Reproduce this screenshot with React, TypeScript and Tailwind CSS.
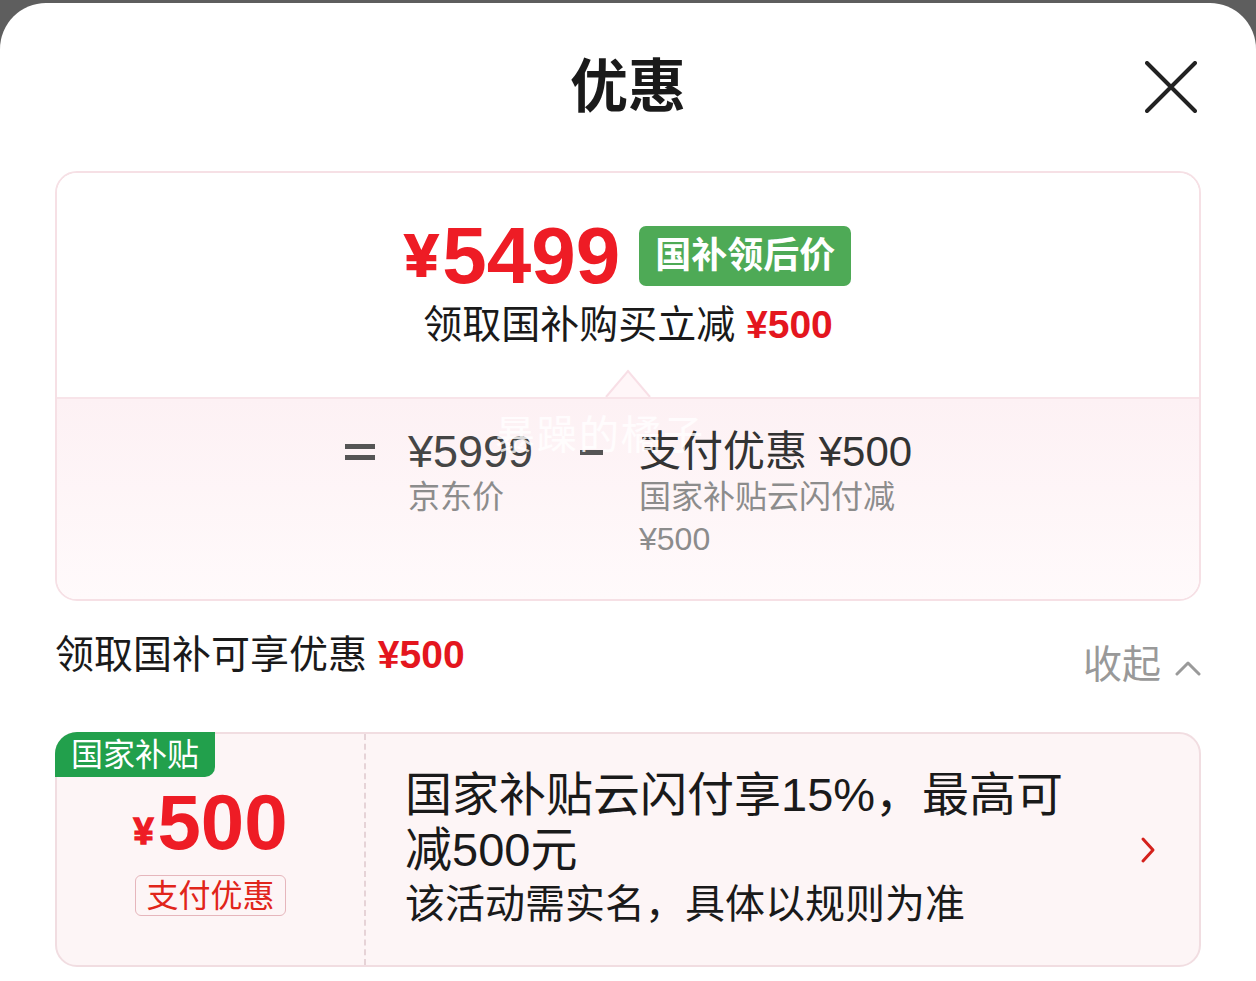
import React from 'react';

const cjk = { fontFamily: '"Liberation Sans", "Noto Sans CJK SC", sans-serif' };

const App: React.FC = () => {
    return (
        <div className="w-[1256px] h-[981px] bg-[#5e5e5e] pt-[3px] overflow-hidden" style={cjk}>
            <div className="h-full bg-white rounded-t-[46px] px-[55px]">
                {/* header */}
                <div className="relative h-[168px] flex items-center justify-center">
                    <h1 className="text-[58px] leading-none font-bold text-[#1a1a1a]">优惠</h1>
                    <svg className="absolute right-[4px] top-[58px]" width="52" height="52" viewBox="0 0 52 52">
                        <path d="M2 2 L50 50 M50 2 L2 50" stroke="#222" strokeWidth="4" strokeLinecap="round" />
                    </svg>
                </div>

                {/* price breakdown card */}
                <div className="border-2 border-[#f6e0e5] rounded-[22px] overflow-hidden">
                    <div className="relative h-[224px] flex flex-col items-center pt-[43px] bg-white">
                        <div className="flex items-center">
                            <span className="text-[60px] leading-none font-bold text-[#ee1c25] mr-[4px] [-webkit-text-stroke:2px_#ee1c25]">¥</span>
                            <span className="text-[80px] leading-none font-bold text-[#ee1c25]">5499</span>
                            <span className="ml-[19px] h-[60px] px-[16px] flex items-center rounded-[7px] bg-[#4eaa56] text-white text-[36px] font-bold">国补领后价</span>
                        </div>
                        <div className="mt-[7px] text-[39px] leading-[44px] text-[#1a1a1a]">
                            领取国补购买立减 <span className="text-[#e4161e] font-bold">¥500</span>
                        </div>
                        <svg className="absolute left-1/2 -translate-x-1/2 bottom-0" width="48" height="28" viewBox="0 0 48 28">
                            <path d="M2 28 L24 2 L46 28" fill="#fff6f8" stroke="#f8dfe6" strokeWidth="2" />
                        </svg>
                    </div>
                    <div className="relative h-[202px] border-t-2 border-[#f8e4e9] bg-gradient-to-b from-[#fdf1f4] to-[#fffafb] pt-[29px] flex justify-center">
                        <div className="w-[30px] mr-[33px] h-[48px] flex flex-col justify-center gap-[6px]">
                            <div className="h-[5px] bg-[#555]"></div>
                            <div className="h-[5px] bg-[#555]"></div>
                        </div>
                        <div className="w-[172px]">
                            <div className="text-[45px] leading-[48px] font-medium text-[#454545]">¥5999</div>
                            <div className="text-[32px] leading-[42px] text-[#8c8c8c]">京东价</div>
                        </div>
                        <div className="w-[23px] mr-[36px] h-[48px] flex items-center">
                            <div className="w-full h-[5px] bg-[#555]"></div>
                        </div>
                        <div className="w-[272px]">
                            <div className="text-[42px] leading-[48px] text-[#333] whitespace-nowrap">支付优惠 <span className="font-medium">¥500</span></div>
                            <div className="text-[32px] leading-[42px] text-[#8c8c8c] whitespace-nowrap">国家补贴云闪付减</div>
                            <div className="text-[32px] leading-[42px] text-[#8c8c8c]">¥500</div>
                        </div>
                        <div className="absolute left-[438px] top-[16px] text-[40px] leading-none text-white/80 tracking-[2px]">暴躁的橘子</div>
                    </div>
                </div>

                {/* subsidy summary */}
                <div className="flex justify-between items-start pt-[30px] h-[131px]">
                    <div className="text-[39px] leading-[48px] text-[#1a1a1a]">
                        领取国补可享优惠 <span className="text-[#e4161e] font-bold">¥500</span>
                    </div>
                    <div className="mt-[10px] flex items-center text-[39px] leading-[48px] text-[#999]">
                        收起
                        <svg className="ml-[14px] mt-[6px]" width="26" height="16" viewBox="0 0 26 16">
                            <path d="M2 14 L13 3 L24 14" fill="none" stroke="#9a9a9a" strokeWidth="3" strokeLinecap="round" strokeLinejoin="round" />
                        </svg>
                    </div>
                </div>

                {/* coupon card */}
                <div className="relative h-[235px] border-2 border-[#f1dde1] rounded-[22px] bg-[#fdf5f6] flex">
                    <div className="absolute -left-[2px] -top-[2px] h-[45px] w-[160px] bg-[#22a04c] rounded-tl-[22px] rounded-br-[10px] flex items-center justify-center text-white text-[32px] leading-none">国家补贴</div>
                    <div className="w-[309px] flex flex-col items-center pt-[49px] border-r-2 border-dashed border-[#e6d3d7]">
                        <div className="flex items-end">
                            <span className="text-[36px] leading-none font-bold text-[#ee1c25] mb-[11px] mr-[4px] [-webkit-text-stroke:1.5px_#ee1c25]">¥</span>
                            <span className="text-[78px] leading-none font-bold text-[#ee1c25]">500</span>
                        </div>
                        <div className="mt-[14px] h-[41px] px-[10px] flex items-center border-[1.5px] border-[#e6b6bc] rounded-[6px] text-[32px] leading-none text-[#e1251b]">支付优惠</div>
                    </div>
                    <div className="flex-1 flex items-center pl-[39px] pr-[43px]">
                        <div className="flex-1">
                            <div className="w-[690px] text-[47px] leading-[55px] text-[#1a1a1a]">国家补贴云闪付享15%，最高可减500元</div>
                            <div className="text-[40px] leading-[55px] text-[#1a1a1a]">该活动需实名，具体以规则为准</div>
                        </div>
                        <svg width="16" height="28" viewBox="0 0 16 28">
                            <path d="M3 3 L13 14 L3 25" fill="none" stroke="#d4211c" strokeWidth="3" strokeLinecap="round" strokeLinejoin="round" />
                        </svg>
                    </div>
                </div>
            </div>
        </div>
    );
};

export default App;
